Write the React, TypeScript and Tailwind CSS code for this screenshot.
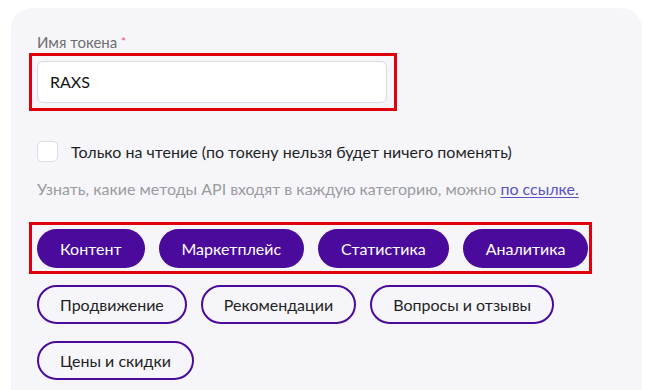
import React from "react";

const filled = ["Контент", "Маркетплейс", "Статистика", "Аналитика"];
const outlined = ["Продвижение", "Рекомендации", "Вопросы и отзывы", "Цены и скидки"];

export default function App() {
  return (
    <div className="w-[646px] h-[390px] bg-white overflow-hidden" style={{ fontFamily: "Lato, 'Noto Sans', sans-serif" }}>
      <div className="ml-[11px] mt-[8px] w-[631px] h-[382px] rounded-t-[20px] bg-[#f6f6fa] pl-[26px] pt-[24px]">
        <div className="text-[15px] leading-[20px] text-[#6e6e6e]">
          Имя токена <span className="text-[#f0506e] text-[12px] align-top">*</span>
        </div>
        <div className="relative mt-[9px] w-[350px]">
          <div className="h-[42px] w-[350px] rounded-[6px] border border-[#dadae0] bg-white pl-[12px] flex items-center text-[16px] text-[#111]">
            RAXS
          </div>
          <div className="absolute -left-[8px] -top-[8px] -right-[10px] -bottom-[8px] border-[3px] border-[#e0000e] pointer-events-none" />
        </div>
        <div className="mt-[38px] flex items-center">
          <div className="w-[21px] h-[21px] rounded-[5px] border border-[#dcdce2] bg-white" />
          <span className="ml-[13px] text-[16px] leading-[20px] text-[#1f1f1f]">
            Только на чтение (по токену нельзя будет ничего поменять)
          </span>
        </div>
        <div className="mt-[17px] text-[16px] leading-[20px] text-[#9b9b9f]">
          Узнать, какие методы API входят в каждую категорию, можно{" "}
          <span className="text-[#5a52c8] underline underline-offset-2">по ссылке.</span>
        </div>
        <div className="relative mt-[30px] w-fit">
          <div className="flex gap-[14px]">
            {filled.map((t) => (
              <div key={t} className="h-[39px] px-[23px] rounded-full bg-[#4a0a9c] text-white text-[16px] flex items-center">
                {t}
              </div>
            ))}
          </div>
          <div className="absolute -left-[8px] -top-[7px] -right-[4px] -bottom-[6px] border-[3px] border-[#e0000e] pointer-events-none" />
        </div>
        <div className="mt-[17px] flex flex-wrap gap-x-[14px] gap-y-[17px] w-[560px]">
          {outlined.map((t) => (
            <div key={t} className="h-[39px] px-[21px] rounded-full border-2 border-[#4a0a9c] text-[#1f1f1f] text-[16px] flex items-center">
              {t}
            </div>
          ))}
        </div>
      </div>
    </div>
  );
}
